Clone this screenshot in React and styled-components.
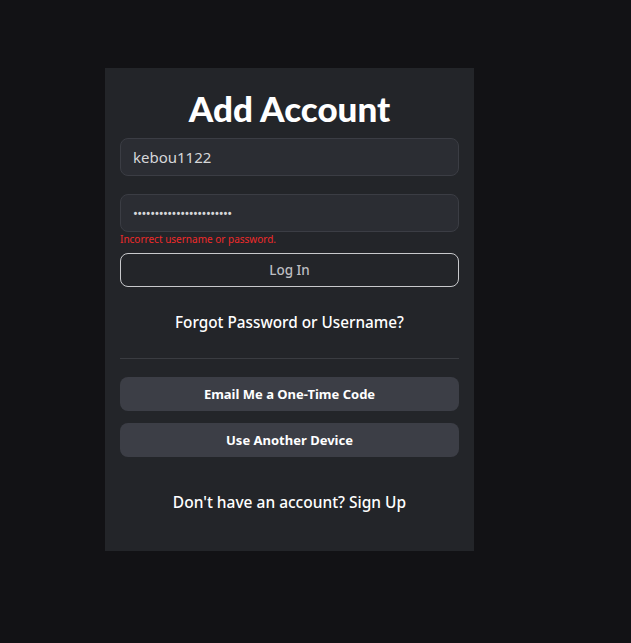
import styled, { createGlobalStyle } from 'styled-components';

const GlobalStyle = createGlobalStyle`
  html, body {
    margin: 0;
    padding: 0;
    background-color: #121215;
    font-family: "Noto Sans", "Liberation Sans", sans-serif;
  }
`;

const Page = styled.div`
  min-height: 643px;
  padding: 68px 0 0 105px;
  box-sizing: border-box;
`;

const Card = styled.div`
  width: 369px;
  height: 483px;
  box-sizing: border-box;
  background-color: #232529;
  padding: 17px 15px 0;
  display: flex;
  flex-direction: column;
`;

const Title = styled.h1`
  margin: 0 0 7px;
  text-align: center;
  color: #ffffff;
  font-family: Lato, "Noto Sans", sans-serif;
  font-weight: 900;
  font-size: 35px;
  line-height: 46px;
`;

const Input = styled.input`
  width: 100%;
  height: 38px;
  box-sizing: border-box;
  background-color: #2b2d33;
  border: 1px solid #3b3d44;
  border-radius: 8px;
  padding: 0 12px;
  color: #d6d7da;
  font-family: "Noto Sans", sans-serif;
  font-size: 15px;
  outline: none;
  margin-top: ${props => props.$gap || 0}px;

  &[type='password'] {
    font-size: 13px;
    letter-spacing: -0.6px;
  }
`;

const ErrorText = styled.div`
  color: #ee2a2a;
  font-size: 10px;
  line-height: 14px;
`;

const OutlineButton = styled.button`
  margin-top: 7px;
  height: 34px;
  width: 100%;
  background: transparent;
  border: 1px solid #c8c9cc;
  border-radius: 8px;
  color: #bdbec2;
  font-family: "Noto Sans", sans-serif;
  font-size: 13.5px;
  font-weight: 500;
`;

const TextLink = styled.div`
  margin-top: 23px;
  text-align: center;
  color: #ffffff;
  font-size: 15.3px;
  font-weight: 500;
  line-height: 24px;
`;

const Divider = styled.hr`
  margin: 24px 0 18px;
  border: none;
  border-top: 1px solid #3a3c41;
`;

const FilledButton = styled.button`
  height: 34px;
  width: 100%;
  margin-bottom: 12px;
  background-color: #3c3e46;
  border: none;
  border-radius: 8px;
  color: #ffffff;
  font-family: "Noto Sans", sans-serif;
  font-size: 13px;
  font-weight: 700;
`;

const Footer = styled.div`
  margin-top: 21px;
  text-align: center;
  color: #ffffff;
  font-size: 15.5px;
  font-weight: 500;
  line-height: 24px;
`;

function App() {
  return (
    <Page>
      <GlobalStyle />
      <Card>
        <Title>Add Account</Title>
        <Input type="text" defaultValue="kebou1122" />
        <Input type="password" defaultValue="kebou1122kebou1122kebou" $gap={18} />
        <ErrorText>Incorrect username or password.</ErrorText>
        <OutlineButton>Log In</OutlineButton>
        <TextLink>Forgot Password or Username?</TextLink>
        <Divider />
        <FilledButton>Email Me a One-Time Code</FilledButton>
        <FilledButton>Use Another Device</FilledButton>
        <Footer>Don't have an account? Sign Up</Footer>
      </Card>
    </Page>
  );
}

export default App;
